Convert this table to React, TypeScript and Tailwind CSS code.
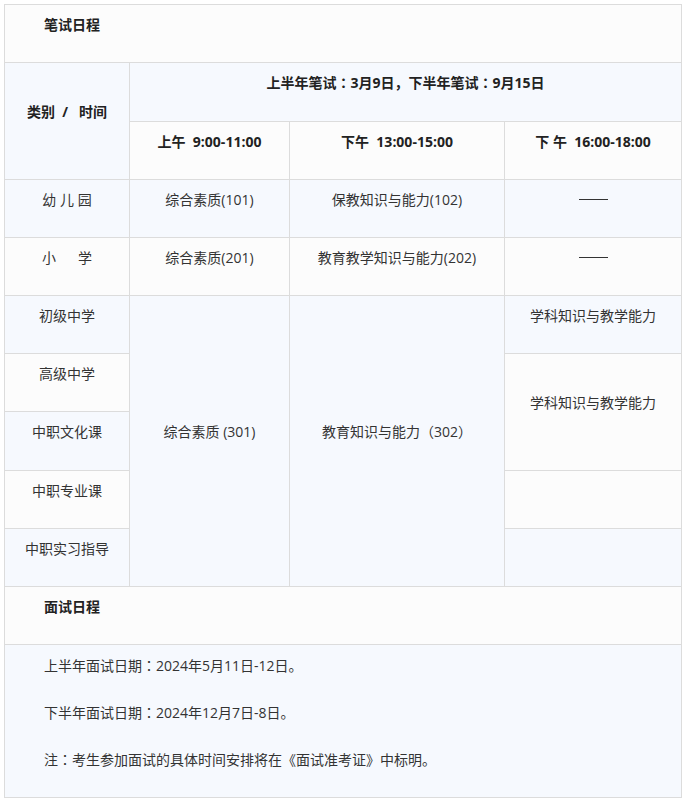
import React from 'react';

const font = { fontFamily: '"Open Sans", "Noto Sans CJK SC", sans-serif' };

const rowW = 'bg-[#fcfcfc]';
const rowB = 'bg-[#f6f9fe]';
const td = 'border border-[#dcdcdc] text-center align-middle whitespace-pre p-0';

// paragraphs in the original carry a bottom margin, so text sits above center
const Cell = ({ children, bold = false }: { children?: React.ReactNode; bold?: boolean }) => (
    <div className={`leading-[22px] mb-[18px] ${bold ? 'font-bold text-[#222]' : 'text-[#333]'}`}>{children}</div>
);

const Dash = () => <span className="inline-block w-[29px] h-px bg-[#333] align-middle mb-[2px]" />;

// full-width colon sits centered in the source font
const Colon = () => <span className="font-['Noto_Sans_CJK_JP',sans-serif] leading-none">：</span>;

const App = () => {
    return (
        <div className="bg-white min-h-[805px] pt-[4px] pl-[4px]" style={font}>
            <table className="table-fixed border-collapse w-[677px] text-[14px] border border-[#dcdcdc]">
                <colgroup>
                    <col className="w-[125px]" />
                    <col className="w-[160px]" />
                    <col className="w-[215px]" />
                    <col className="w-[177px]" />
                </colgroup>
                <tbody>
                    <tr className={`${rowW} h-[58px]`}>
                        <td colSpan={4} className="border border-[#dcdcdc] align-middle p-0 pl-[39px]">
                            <Cell bold>笔试日程</Cell>
                        </td>
                    </tr>
                    <tr className={`${rowB} h-[59px]`}>
                        <td rowSpan={2} className={`${td} ${rowB}`}>
                            <Cell bold>{'类别  /   时间'}</Cell>
                        </td>
                        <td colSpan={3} className={td}>
                            <Cell bold>上半年笔试<Colon />3月9日，下半年笔试<Colon />9月15日</Cell>
                        </td>
                    </tr>
                    <tr className={`${rowW} h-[58px]`}>
                        <td className={td}><Cell bold>{'上午  9:00-11:00'}</Cell></td>
                        <td className={td}><Cell bold>{'下午  13:00-15:00'}</Cell></td>
                        <td className={td}><Cell bold>{'下 午  16:00-18:00'}</Cell></td>
                    </tr>
                    <tr className={`${rowB} h-[58px]`}>
                        <td className={td}><Cell>幼 儿 园</Cell></td>
                        <td className={td}><Cell>综合素质(101)</Cell></td>
                        <td className={td}><Cell>保教知识与能力(102)</Cell></td>
                        <td className={td}><Cell><Dash /></Cell></td>
                    </tr>
                    <tr className={`${rowW} h-[58px]`}>
                        <td className={td}><Cell>{'小      学'}</Cell></td>
                        <td className={td}><Cell>综合素质(201)</Cell></td>
                        <td className={td}><Cell>教育教学知识与能力(202)</Cell></td>
                        <td className={td}><Cell><Dash /></Cell></td>
                    </tr>
                    <tr className={`${rowB} h-[58px]`}>
                        <td className={td}><Cell>初级中学</Cell></td>
                        <td rowSpan={5} className={`${td} ${rowB}`}><Cell>综合素质 (301)</Cell></td>
                        <td rowSpan={5} className={`${td} ${rowB}`}><Cell>教育知识与能力（302）</Cell></td>
                        <td className={td}><Cell>学科知识与教学能力</Cell></td>
                    </tr>
                    <tr className={`${rowW} h-[58px]`}>
                        <td className={td}><Cell>高级中学</Cell></td>
                        <td rowSpan={2} className={`${td} ${rowW}`}><Cell>学科知识与教学能力</Cell></td>
                    </tr>
                    <tr className={`${rowB} h-[59px]`}>
                        <td className={td}><Cell>中职文化课</Cell></td>
                    </tr>
                    <tr className={`${rowW} h-[58px]`}>
                        <td className={td}><Cell>中职专业课</Cell></td>
                        <td className={td}></td>
                    </tr>
                    <tr className={`${rowB} h-[58px]`}>
                        <td className={td}><Cell>中职实习指导</Cell></td>
                        <td className={td}></td>
                    </tr>
                    <tr className={`${rowW} h-[58px]`}>
                        <td colSpan={4} className="border border-[#dcdcdc] align-middle p-0 pl-[39px]">
                            <Cell bold>面试日程</Cell>
                        </td>
                    </tr>
                    <tr className={rowB}>
                        <td colSpan={4} className="border border-[#dcdcdc] align-top pt-[10px] pb-[1px] pl-[39px] text-[#333]">
                            <p className="leading-[22px] mb-[25px]">上半年面试日期<Colon />2024年5月11日-12日。</p>
                            <p className="leading-[22px] mb-[25px]">下半年面试日期<Colon />2024年12月7日-8日。</p>
                            <p className="leading-[22px] mb-[25px]">注<Colon />考生参加面试的具体时间安排将在《面试准考证》中标明。</p>
                        </td>
                    </tr>
                </tbody>
            </table>
        </div>
    );
};

export default App;
